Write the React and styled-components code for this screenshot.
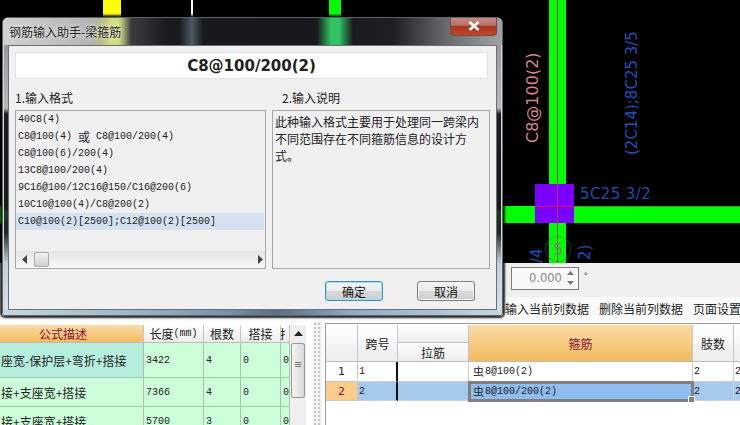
import React from "react";
import styled, { createGlobalStyle } from "styled-components";

const Global = createGlobalStyle`
  html, body { margin: 0; padding: 0; background: #fff; }
  body { font-family: "Noto Sans CJK SC", "Liberation Sans", sans-serif; font-size: 12px; color: #222; }
  * { box-sizing: border-box; }
`;

const Page = styled.div`
  position: relative; width: 740px; height: 425px; overflow: hidden;
  display: flex; flex-direction: column; background: #fbfbfb;
`;

/* CAD canvas: free canvas, items placed by coordinates */
const Canvas = styled.div`
  position: relative; height: 263px; flex: none; background: #000; overflow: hidden;
`;
const Beam = styled.div`
  position: absolute; left: ${p => p.$x}px; top: ${p => p.$y}px;
  width: ${p => p.$w}px; height: ${p => p.$h}px; background: ${p => p.$c};
`;
const CadLabel = styled.div`
  position: absolute; left: ${p => p.$x}px; top: ${p => p.$y}px; white-space: nowrap;
  font-family: "DejaVu Sans", sans-serif; font-size: ${p => p.$size || 15}px; line-height: 1;
  color: ${p => p.$c}; letter-spacing: ${p => p.$ls || 0}px;
  transform-origin: 0 0; transform: ${p => (p.$up ? "rotate(-90deg)" : "none")};
`;
const AxisBubble = styled.div`
  position: absolute; left: 545px; top: 236px; width: 26px; height: 26px; border-radius: 50%;
  border: 1px dotted #1f8a1f; color: #77857a; display: flex; align-items: center; justify-content: center;
  font-family: "DejaVu Sans", sans-serif; font-size: 16px;
`;

const ToolRow = styled.div`
  height: 34px; flex: none; background: #f0f0f0; display: flex; align-items: center;
  padding: 0 0 4px 511px; gap: 5px;
`;
const Spinner = styled.div`
  width: 68px; height: 23px; border: 1px solid #7c7c7c; background: #f8f8f8; display: flex;
  align-items: center; justify-content: space-between; padding: 0 4px 0 17px;
  font-family: "DejaVu Sans", sans-serif; font-size: 11.5px; color: #8a8a8a;
`;
const SpinArrows = styled.div`
  display: flex; flex-direction: column; gap: 6px; color: #777;
  svg { display: block; width: 7px; height: 4px; }
`;
const Degree = styled.span`
  font-size: 10px; color: #555; margin-top: -5px;
`;

const MenuRow = styled.div`
  height: 25px; flex: none; display: flex; align-items: center; gap: 10px; padding: 0 0 2px 505px;
  white-space: nowrap; font-size: 12px; color: #222; background: #fbfbfb;
`;

const Panes = styled.div`
  flex: 1; display: flex; min-height: 0; background: #fff;
`;
const LeftPane = styled.div`
  width: 306px; flex: none; padding-top: 3px; display: flex; overflow: hidden;
`;
const Sheet = styled.div`
  width: 290px; flex: none; display: grid; grid-template-columns: 144px 60px 37px 40px 9px;
  grid-template-rows: 18px 35px 29px 29px; overflow: hidden;
`;
const Head = styled.div`
  display: flex; align-items: center; justify-content: center; white-space: nowrap; overflow: hidden;
  font-size: 12px; color: ${p => (p.$active ? "#8c0f36" : "#222")};
  background: ${p => (p.$active ? "linear-gradient(#f9dca6, #f3bb5f)" : "linear-gradient(#fff, #ececec)")};
  border-right: 1px solid #c4c4c4; border-bottom: 1px solid #bdbdbd;
  padding-right: ${p => p.$shift || 0}px;
  grid-column: ${p => p.$col || "auto"}; grid-row: ${p => p.$row || "auto"};
`;
const Cell = styled.div`
  display: flex; align-items: center; padding-left: 1px; white-space: nowrap; overflow: hidden;
  font-size: 12px; color: #222; background: ${p => (p.$mint ? "#b5eedd" : "#ccffd9")};
  border-right: 1px solid #a9c4ac; border-bottom: 1px solid #a9c4ac;
`;
const Mono = styled.span`
  font-family: "Liberation Mono", "DejaVu Sans Mono", monospace; font-size: 10px; color: #222;
`;
const NumCell = styled(Cell)`
  padding-left: 2px;
`;
const VBar = styled.div`
  width: 16px; flex: none; background: #efefef; display: flex; flex-direction: column; align-items: center;
  svg { display: block; margin: 6px 0 7px; }
`;
const VThumb = styled.div`
  width: 14px; height: 55px; border: 1px solid #999; border-radius: 2px;
  background: linear-gradient(90deg, #f4f4f4, #d9d9d9); display: flex; flex-direction: column;
  align-items: center; justify-content: center; gap: 1px; padding-bottom: 12px;
  i { display: block; width: 6px; height: 1px; background: #777; }
`;
const Splitter = styled.div`
  width: 19px; flex: none; background-color: #f3f3f3;
  background-image: radial-gradient(circle, #c4c4c4 0.8px, transparent 1px);
  background-size: 4px 4px; background-position: 7px 0; background-repeat: repeat;
  background-clip: content-box; padding: 0 3px 0 7px;
`;
const RightPane = styled.div`
  flex: 1; min-width: 0; border-top: 1px solid #9a9a9a; border-left: 1px solid #9a9a9a; margin-top: 1px;
  padding-top: 1px; overflow: hidden;
`;
const Table = styled.div`
  width: 420px; display: grid; grid-template-columns: 32px 40px 71px 224px 41px 12px;
  grid-template-rows: 18px 19px 20px 19px;
`;
const RowNo = styled.div`
  display: flex; align-items: center; justify-content: center; font-family: "DejaVu Sans", sans-serif; font-size: 11px;
  background: ${p => (p.$on ? "#f8cd8b" : "#fff")}; color: ${p => (p.$on ? "#8c0f36" : "#222")};
  border-right: 1px solid #c8c8c8; border-bottom: 1px solid #c8c8c8;
`;
const GridCell = styled.div`
  position: relative; display: flex; align-items: center; padding-left: ${p => p.$pad || 1}px; white-space: nowrap;
  background: ${p => (p.$sel ? "#8fbdef" : p.$row ? "#a6c9ee" : "#fff")};
  border-right: ${p => (p.$dark ? "2px solid #111" : "1px solid #d0d0d0")};
  border-bottom: 1px solid #d0d0d0;
  ${p => p.$sel && `
    outline: 3px solid #808080; outline-offset: -2px; z-index: 1;
    &::after { content: ""; position: absolute; right: -3px; bottom: -3px; width: 5px; height: 5px;
      background: #808080; border: 1px solid #fff; }
  `}
`;
const Han = styled.span`
  font-size: ${p => p.$size || 12}px; line-height: 1; margin-right: ${p => p.$mr || 0}px; margin-left: ${p => p.$ml || 0}px;
`;

/* Dialog: a window over the canvas */
const Dialog = styled.div`
  position: absolute; left: 2px; top: 17px; width: 501px; height: 299px; display: flex; flex-direction: column;
  border-radius: 6px 6px 3px 3px; border: 1px solid #5e6468;
  box-shadow: 0 0 0 1px #d8d8d8 inset, 0 0 2px 2px rgba(0, 0, 0, 0.85);
  background: linear-gradient(#c0c0c0 0, #9a9a9a 30px, #b8b8b8 90px, #1d1d1f 96px, #17191c 190px, #1e3c24 195px, #1c2a20 205px, #20262b 215px, #bcd2de 245px, #d7e4ec 299px);
  overflow: hidden;
`;
const TitleBar = styled.div`
  position: relative; height: 27px; flex: none; padding: 6px 0 0 6px; font-size: 12px; line-height: 16px; color: #222;
  text-shadow: 0 0 6px rgba(255, 255, 255, 0.75), 0 0 2px rgba(255, 255, 255, 0.6);
  background:
    linear-gradient(90deg, transparent 88px, rgba(228, 240, 130, 0.85) 108px, rgba(228, 240, 130, 0.85) 116px, transparent 128px),
    linear-gradient(90deg, transparent 176px, rgba(105, 125, 145, 0.65) 189px, transparent 200px),
    linear-gradient(90deg, transparent 314px, rgba(50, 205, 105, 0.95) 328px, rgba(50, 205, 105, 0.95) 336px, transparent 350px),
    linear-gradient(90deg, #d0d0d0 0, #b5b5b5 88px, #3a3c3e 128px, #181a1c 165px, #16181a 300px, #1d1f21 390px, #6e7173 448px, #a2a4a5 501px);
`;
const CloseButton = styled.div`
  position: absolute; right: 5px; top: -1px; width: 47px; height: 19px; display: flex; align-items: center;
  justify-content: center; border: 1px solid #6f4a46; border-top: none; border-radius: 0 0 4px 4px;
  background: linear-gradient(#c98f85 0, #b87266 45%, #a5351f 52%, #c4452c 100%);
`;
const Client = styled.div`
  flex: 1; margin: 0 5px; padding: 6px 9px 0 6px; background: #f0f0f0; border: 1px solid #6c7074;
  display: flex; flex-direction: column; min-height: 0;
`;
const Formula = styled.div`
  width: 473px; height: 27px; flex: none; background: #fff; border: 1px solid #e2e2e2; display: flex;
  align-items: center; justify-content: center; font-family: "DejaVu Sans", sans-serif; font-weight: 700;
  font-size: 15px; color: #222;
`;
const Columns = styled.div`
  width: 475px; display: grid; grid-template-columns: 251px 218px; column-gap: 6px;
  grid-template-rows: 31px 159px;
`;
const ColLabel = styled.div`
  display: flex; align-items: center; padding-left: ${p => p.$pad || 0}px; padding-top: 6px; font-size: 12px; color: #222;
`;
const Box = styled.div`
  border: 1px solid #a8a8a8; background: #f0f0f0; display: flex; flex-direction: column; min-height: 0;
`;
const FormatList = styled.div`
  flex: 1; padding-top: 0; overflow: hidden;
`;
const FormatRow = styled.div`
  height: 17px; display: flex; align-items: center; padding-left: 2px; white-space: nowrap;
  background: ${p => (p.$on ? "#d3e2f1" : "transparent")}; margin-right: 1px;
`;
const HBar = styled.div`
  height: 17px; flex: none; background: linear-gradient(#e4e4e4, #f6f6f6); display: flex; align-items: center;
  padding: 0 2px 0 6px; border-bottom: 1px solid #fff;
  svg { display: block; }
`;
const HThumb = styled.div`
  width: 15px; height: 15px; margin-left: 7px; border: 1px solid #aaa; border-radius: 2px;
  background: linear-gradient(#f2f2f2, #cfd0d2); margin-right: auto;
`;
const Notes = styled.div`
  padding: 2px 4px 0 2px; font-size: 12px; line-height: 17px; color: #222; word-break: break-all;
`;
const Footer = styled.div`
  display: flex; padding: 12px 0 0 310px; gap: 34px;
`;
const Button = styled.div`
  width: 58px; height: 20px; display: flex; align-items: center; justify-content: center; font-size: 12px; color: #111;
  border-radius: 3px; border: 1px solid ${p => (p.$primary ? "#3f8fb4" : "#7e7e7e")};
  box-shadow: inset 0 0 0 1px ${p => (p.$primary ? "#a5e0f4" : "#f4f4f4")};
  background: linear-gradient(#f4f4f4 0, #ebebeb 48%, #d8d8d8 52%, #cdcfd1 100%);
`;
const FrameBottom = styled.div`
  height: 5px; flex: none;
  background: linear-gradient(90deg, #c5d6e0 0, #9db7c8 25%, #7692ab 45%, #5a6e84 55%, #8fabc2 70%, #c4d6e2 100%);
`;

const Up = () => <svg width="9" height="5" viewBox="0 0 9 5"><path d="M4.5 0 9 5H0z" fill="currentColor" /></svg>;
const Down = () => <svg width="9" height="5" viewBox="0 0 9 5"><path d="M0 0h9L4.5 5z" fill="currentColor" /></svg>;
const Left = () => <svg width="5" height="9" viewBox="0 0 5 9"><path d="M5 0v9L0 4.500z" fill="#444" /></svg>;
const Right = () => <svg width="5" height="9" viewBox="0 0 5 9"><path d="M0 0v9l5-4.500z" fill="#444" /></svg>;

const formats = [
  <Mono>40C8(4)</Mono>,
  <><Mono>C8@100(4)</Mono><Han $ml={6} $mr={6}>或</Han><Mono>C8@100/200(4)</Mono></>,
  <Mono>C8@100(6)/200(4)</Mono>,
  <Mono>13C8@100/200(4)</Mono>,
  <Mono>9C16@100/12C16@150/C16@200(6)</Mono>,
  <Mono>10C10@100(4)/C8@200(2)</Mono>,
  <Mono>C10@100(2)[2500];C12@100(2)[2500]</Mono>,
];

export default function App() {
  return (
    <Page>
      <Global />
      <Canvas>
        <Beam $x={103} $y={0} $w={18} $h={20} $c="#ffff00" />
        <Beam $x={191} $y={0} $w={2} $h={20} $c="#fff" />
        <Beam $x={329} $y={0} $w={12} $h={20} $c="#00ff00" />
        <Beam $x={549} $y={0} $w={17} $h={263} $c="#00ff00" />
        <Beam $x={0} $y={206} $w={740} $h={17} $c="#00ff00" />
        <Beam $x={535} $y={184} $w={39} $h={39} $c="#7a00ff" />
        <Beam $x={557} $y={0} $w={1} $h={263} $c="#b4325a" />
        <Beam $x={535} $y={206} $w={39} $h={1} $c="#e0106a" />
        <Beam $x={574} $y={206} $w={166} $h={1} $c="#3f9a10" />
        <CadLabel $up $x={525} $y={143} $c="#d98484" $size={16}>C8@100(2)</CadLabel>
        <CadLabel $up $x={625} $y={155} $c="#1d52b8" $size={15}>(2C14);8C25 3/5</CadLabel>
        <CadLabel $x={580} $y={187} $c="#1d4ea8" $size={15} $ls={0.4}>5C25 3/2</CadLabel>
        <CadLabel $up $x={530} $y={263} $c="#1d52b8" $size={15}>/4</CadLabel>
        <CadLabel $up $x={578} $y={260} $c="#1d52b8" $size={15}>2)</CadLabel>
        <AxisBubble>5</AxisBubble>
      </Canvas>

      <ToolRow>
        <Spinner>
          0.000
          <SpinArrows><Up /><Down /></SpinArrows>
        </Spinner>
        <Degree>°</Degree>
      </ToolRow>

      <MenuRow>
        <span>输入当前列数据</span>
        <span>删除当前列数据</span>
        <span>页面设置</span>
      </MenuRow>

      <Panes>
        <LeftPane>
          <Sheet>
            <Head $active $shift={17}>公式描述</Head>
            <Head>长度<Mono>(mm)</Mono></Head>
            <Head>根数</Head>
            <Head>搭接</Head>
            <Head>扌</Head>

            <Cell $mint>座宽-保护层+弯折+搭接</Cell>
            <NumCell><Mono>3422</Mono></NumCell>
            <NumCell><Mono>4</Mono></NumCell>
            <NumCell><Mono>0</Mono></NumCell>
            <NumCell><Mono>0</Mono></NumCell>

            <Cell>接+支座宽+搭接</Cell>
            <NumCell><Mono>7366</Mono></NumCell>
            <NumCell><Mono>4</Mono></NumCell>
            <NumCell><Mono>0</Mono></NumCell>
            <NumCell><Mono>0</Mono></NumCell>

            <Cell>接+支座宽+搭接</Cell>
            <NumCell><Mono>5700</Mono></NumCell>
            <NumCell><Mono>3</Mono></NumCell>
            <NumCell><Mono>0</Mono></NumCell>
            <NumCell><Mono>0</Mono></NumCell>
          </Sheet>
          <VBar>
            <Up />
            <VThumb><i /><i /><i /></VThumb>
          </VBar>
        </LeftPane>
        <Splitter />
        <RightPane>
          <Table>
            <Head $col="1" $row="1 / 3" />
            <Head $col="2" $row="1 / 3">跨号</Head>
            <Head $col="3" $row="1" />
            <Head $col="3" $row="2">拉筋</Head>
            <Head $col="4" $row="1 / 3" $active>箍筋</Head>
            <Head $col="5" $row="1 / 3">肢数</Head>
            <Head $col="6" $row="1 / 3" />

            <RowNo>1</RowNo>
            <GridCell $dark><Mono>1</Mono></GridCell>
            <GridCell />
            <GridCell $pad={4}><Han $size={11} $mr={1}>虫</Han><Mono>8@100(2)</Mono></GridCell>
            <GridCell><Mono>2</Mono></GridCell>
            <GridCell><Mono>2</Mono></GridCell>

            <RowNo $on>2</RowNo>
            <GridCell $row $dark><Mono>2</Mono></GridCell>
            <GridCell $row />
            <GridCell $sel $pad={4}><Han $size={11} $mr={1}>虫</Han><Mono>8@100/200(2)</Mono></GridCell>
            <GridCell $row><Mono>2</Mono></GridCell>
            <GridCell $row><Mono>2</Mono></GridCell>
          </Table>
        </RightPane>
      </Panes>

      <Dialog>
        <TitleBar>
          钢筋输入助手-梁箍筋
          <CloseButton>
            <svg width="12" height="10" viewBox="0 0 12 10">
              <path d="M1.500 1 10.500 9M10.500 1 1.500 9" stroke="#fff" strokeWidth="2.600" fill="none" />
            </svg>
          </CloseButton>
        </TitleBar>
        <Client>
          <Formula>C8@100/200(2)</Formula>
          <Columns>
            <ColLabel>1.输入格式</ColLabel>
            <ColLabel $pad={10}>2.输入说明</ColLabel>
            <Box>
              <FormatList>
                {formats.map((f, i) => (
                  <FormatRow key={i} $on={i === 6}>{f}</FormatRow>
                ))}
              </FormatList>
              <HBar>
                <Left />
                <HThumb />
                <Right />
              </HBar>
            </Box>
            <Box>
              <Notes>此种输入格式主要用于处理同一跨梁内不同范围存在不同箍筋信息的设计方式。</Notes>
            </Box>
          </Columns>
          <Footer>
            <Button $primary>确定</Button>
            <Button>取消</Button>
          </Footer>
        </Client>
        <FrameBottom />
      </Dialog>
    </Page>
  );
}
